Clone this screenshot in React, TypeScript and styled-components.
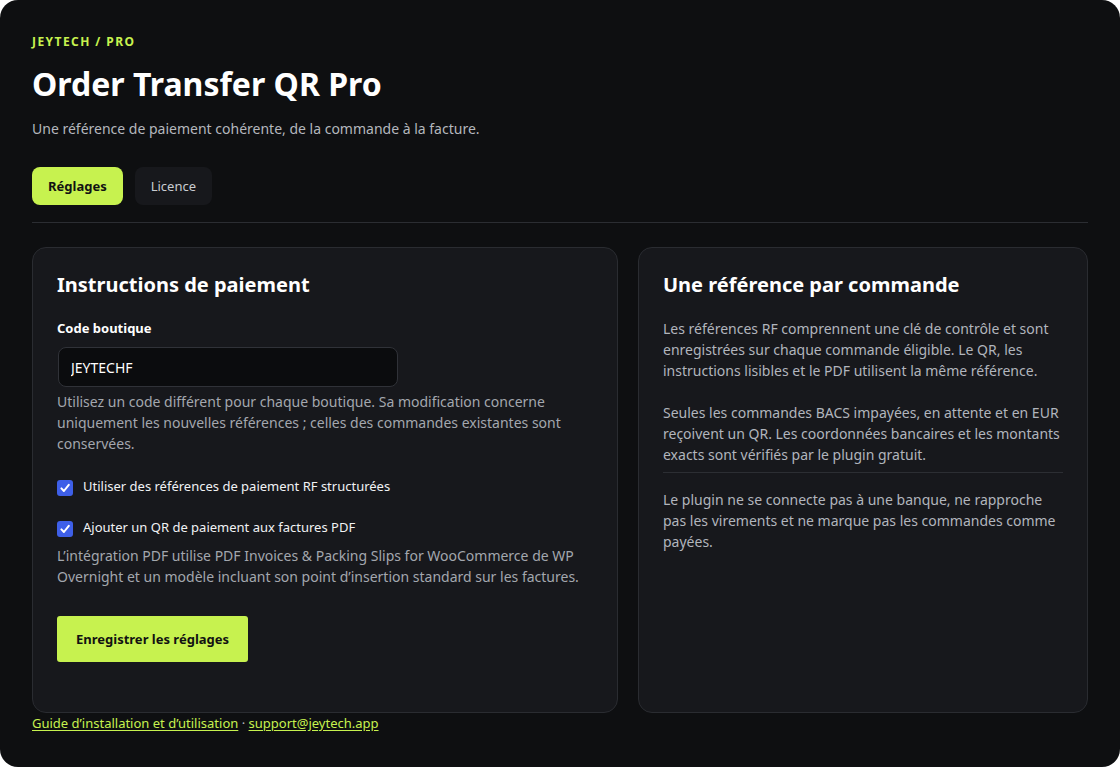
import React from 'react';
import styled, { createGlobalStyle } from 'styled-components';

const GlobalStyle = createGlobalStyle`
  * { box-sizing: border-box; }
  html, body { margin: 0; padding: 0; background: #ffffff; }
  body {
    font-family: "Noto Sans", "Open Sans", sans-serif;
    -webkit-font-smoothing: antialiased;
  }
`;

const lime = '#c7f24f';

export default function App() {
  return (
    <>
      <GlobalStyle />
      <Shell>
        <Header>
          <Eyebrow>JEYTECH / PRO</Eyebrow>
          <Title>Order Transfer QR Pro</Title>
          <Lead>Une référence de paiement cohérente, de la commande à la facture.</Lead>
          <Tabs>
            <Tab $active>Réglages</Tab>
            <Tab>Licence</Tab>
          </Tabs>
        </Header>

        <Columns>
          <Card>
            <CardHeading>Instructions de paiement</CardHeading>
            <FieldLabel htmlFor="shop-code">Code boutique</FieldLabel>
            <TextInput id="shop-code" defaultValue="JEYTECHF" />
            <Help>
              Utilisez un code différent pour chaque boutique. Sa modification concerne
              uniquement les nouvelles références ; celles des commandes existantes sont
              conservées.
            </Help>

            <CheckRow $gap={22}>
              <Box>
                <CheckMark />
              </Box>
              <span>Utiliser des références de paiement RF structurées</span>
            </CheckRow>
            <CheckRow $gap={21}>
              <Box>
                <CheckMark />
              </Box>
              <span>Ajouter un QR de paiement aux factures PDF</span>
            </CheckRow>
            <Help $gap={8}>
              L’intégration PDF utilise PDF Invoices &amp; Packing Slips for WooCommerce de WP
              Overnight et un modèle incluant son point d’insertion standard sur les factures.
            </Help>

            <SaveButton type="button">Enregistrer les réglages</SaveButton>
          </Card>

          <Card>
            <CardHeading>Une référence par commande</CardHeading>
            <Body>
              Les références RF comprennent une clé de contrôle et sont enregistrées sur
              chaque commande éligible. Le QR, les instructions lisibles et le PDF utilisent
              la même référence.
            </Body>
            <Body>
              Seules les commandes BACS impayées, en attente et en EUR reçoivent un QR. Les
              coordonnées bancaires et les montants exacts sont vérifiés par le plugin gratuit.
            </Body>
            <Rule />
            <Body>
              Le plugin ne se connecte pas à une banque, ne rapproche pas les virements et ne
              marque pas les commandes comme payées.
            </Body>
          </Card>
        </Columns>

        <Footer>
          <FooterLink href="#">Guide d’installation et d’utilisation</FooterLink>
          {' · '}
          <FooterLink href="#">support@jeytech.app</FooterLink>
        </Footer>
      </Shell>
    </>
  );
}

function CheckMark() {
  return (
    <svg width="12" height="12" viewBox="0 0 12 12" fill="none">
      <path d="M2.4 6.4 L4.9 9 L9.8 2.8" stroke="#fff" strokeWidth="2" strokeLinecap="round" strokeLinejoin="round" />
    </svg>
  );
}

const Shell = styled.div`
  width: 1120px;
  height: 767px;
  background: #0e0f11;
  border-radius: 18px;
  padding: 33px 32px 0;
  overflow: hidden;
  color: #f3f4f6;
`;

const Header = styled.header`
  display: flex;
  flex-direction: column;
  align-items: flex-start;
  padding-bottom: 17px;
  border-bottom: 1px solid #2b2d32;
`;

const Eyebrow = styled.div`
  font-size: 12px;
  line-height: 18px;
  font-weight: 700;
  letter-spacing: 0.12em;
  color: ${lime};
`;

const Title = styled.h1`
  margin: 13px 0 0;
  font-size: 32px;
  line-height: 40px;
  font-weight: 700;
  color: #ffffff;
`;

const Lead = styled.p`
  margin: 15px 0 0;
  font-size: 14px;
  line-height: 20px;
  color: #b4b7bd;
`;

const Tabs = styled.nav`
  display: flex;
  gap: 12px;
  margin-top: 28px;
`;

const Tab = styled.button<{ $active?: boolean }>`
  height: 38px;
  padding: 0 16px;
  border: 0;
  border-radius: 8px;
  font-family: inherit;
  font-size: 13px;
  font-weight: ${(p) => (p.$active ? 700 : 400)};
  background: ${(p) => (p.$active ? lime : '#17181c')};
  color: ${(p) => (p.$active ? '#121212' : '#c9ccd1')};
`;

const Columns = styled.div`
  display: grid;
  grid-template-columns: 586px 1fr;
  gap: 20px;
  margin-top: 24px;
`;

const Card = styled.section`
  display: flex;
  flex-direction: column;
  align-items: flex-start;
  min-height: 466px;
  padding: 23px 24px 24px;
  background: #17181c;
  border: 1px solid #2a2c31;
  border-radius: 14px;
`;

const CardHeading = styled.h2`
  margin: 0 0 19px;
  font-size: 20px;
  line-height: 28px;
  font-weight: 700;
  color: #ffffff;
`;

const FieldLabel = styled.label`
  font-size: 13px;
  line-height: 20px;
  font-weight: 700;
  color: #ffffff;
  margin-bottom: 9px;
`;

const TextInput = styled.input`
  width: 340px;
  height: 40px;
  margin-left: 1px;
  padding: 0 12px;
  background: #0b0c0e;
  border: 1px solid #303238;
  border-radius: 8px;
  font-family: inherit;
  font-size: 14px;
  color: #ffffff;
  outline: none;
`;

const Help = styled.p<{ $gap?: number }>`
  margin: ${(p) => p.$gap ?? 4}px 0 0;
  font-size: 14px;
  line-height: 21px;
  color: #a3a7ae;
`;

const CheckRow = styled.label<{ $gap: number }>`
  display: flex;
  align-items: center;
  gap: 10px;
  margin-top: ${(p) => p.$gap}px;
  font-size: 13px;
  line-height: 18px;
  color: #f1f2f4;
`;

const Box = styled.span`
  display: inline-flex;
  align-items: center;
  justify-content: center;
  width: 16px;
  height: 16px;
  margin-top: 4px;
  border-radius: 3px;
  background: #3e5fe8;
`;

const SaveButton = styled.button`
  margin-top: 29px;
  height: 46px;
  padding: 0 19px;
  border: 0;
  border-radius: 3px;
  background: ${lime};
  color: #121212;
  font-family: inherit;
  font-size: 13px;
  font-weight: 700;
`;

const Body = styled.p`
  margin: 0;
  font-size: 14px;
  line-height: 21px;
  color: #b1b5bc;

  & + & {
    margin-top: 21px;
  }
`;

const Rule = styled.hr`
  width: 100%;
  margin: 7px 0 16px;
  border: 0;
  border-top: 1px solid #2c2e33;
`;

const Footer = styled.footer`
  font-size: 13px;
  line-height: 20px;
  color: #b4b7bd;
`;

const FooterLink = styled.a`
  color: ${lime};
  text-decoration: underline;
  text-underline-offset: 2px;
`;
